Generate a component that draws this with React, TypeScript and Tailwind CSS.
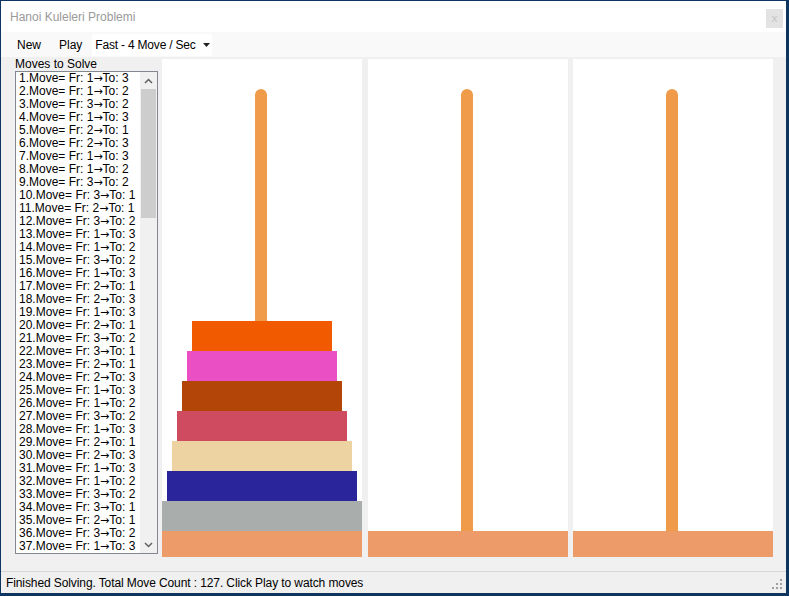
import { useMemo } from 'react';

type Move = { from: number; to: number };

// disk widths/colours, smallest on top
const DISKS = [
  { w: 140, color: 'bg-[#f25a00]' },
  { w: 150, color: 'bg-[#ea50c4]' },
  { w: 160, color: 'bg-[#b34508]' },
  { w: 170, color: 'bg-[#cf4b5f]' },
  { w: 180, color: 'bg-[#eed3a2]' },
  { w: 190, color: 'bg-[#2b259c]' },
  { w: 200, color: 'bg-[#a9aeac]' },
];

// rows that fit in the list box
const VISIBLE_ROWS = 37;

function solve(n: number, from: number, to: number, via: number, out: Move[]) {
  if (n === 0) return;
  solve(n - 1, from, via, to, out);
  out.push({ from, to });
  solve(n - 1, via, to, from, out);
}

function Chevron({ up }: { up?: boolean }) {
  return (
    <svg width="9" height="6" viewBox="0 0 9 6" className="text-[#606060]">
      <polyline
        points={up ? '1,5 4.5,1.5 8,5' : '1,1 4.5,4.5 8,1'}
        fill="none"
        stroke="currentColor"
        strokeWidth="1.5"
      />
    </svg>
  );
}

function Tower({ disks }: { disks: typeof DISKS }) {
  return (
    <div className="w-[200px] h-full bg-white flex flex-col items-center">
      <div className="mt-[30px] flex-1 w-[12px] mr-[2px] rounded-t-full bg-[#ef9b4a]" />
      {disks.map((d) => (
        <div key={d.w} className={`h-[30px] ${d.color}`} style={{ width: d.w }} />
      ))}
      <div className="h-[26px] w-full bg-[#ee9b6a]" />
    </div>
  );
}

export default function App() {
  const moves = useMemo(() => {
    const out: Move[] = [];
    solve(7, 1, 3, 2, out);
    return out;
  }, []);

  return (
    <div className="w-[789px] h-[596px] bg-[#0e3460] pl-px pt-px font-['Liberation_Sans',Arial,sans-serif] text-[12px] text-black">
      <div className="w-[785px] h-[592px] bg-[#f0f0f0] flex flex-col">
        {/* Title bar */}
        <div className="h-[31px] bg-white flex items-center pl-[9px] pr-[3px]">
          <span className="flex-1 text-[#9a9a9a]">Hanoi Kuleleri Problemi</span>
          <div className="self-start mt-[8px] w-[17px] h-[19px] bg-[#e3e3e3] flex items-center justify-center text-[11px] leading-none text-[#c4c4c4]">
            x
          </div>
        </div>

        {/* Menu */}
        <div className="h-[25px] bg-[#f9f9f9] flex items-center pl-[16px]">
          <span>New</span>
          <span className="ml-[18px]">Play</span>
          <div className="ml-[10px] w-[120px] h-[22px] bg-white flex items-center">
            <div className="ml-[3px] w-[101px] overflow-hidden whitespace-nowrap tracking-[-0.2px]">
              Fast - 4 Move / Sec
            </div>
            <svg width="7" height="4" viewBox="0 0 7 4" className="ml-[7px]">
              <polygon points="0,0 7,0 3.5,4" fill="#222" />
            </svg>
          </div>
        </div>

        {/* Body */}
        <div className="h-[514px] flex pl-[14px]">
          <div className="w-[143px] flex flex-col">
            <div className="h-[14px] leading-[14px]">Moves to Solve</div>
            <div className="h-[483px] border border-[#828790] bg-white flex overflow-hidden">
              <div className="flex-1 pl-[3px]">
                {moves.slice(0, VISIBLE_ROWS).map((m, i) => (
                  <div key={i} className="h-[13px] leading-[13px] whitespace-nowrap">
                    {i + 1}.Move= Fr: {m.from}
                    <span className="font-['DejaVu_Sans',sans-serif] text-[11px]">→</span>
                    To: {m.to}
                  </div>
                ))}
              </div>
              <div className="w-[17px] h-full bg-[#f0f0f0] flex flex-col">
                <div className="h-[17px] flex items-center justify-center">
                  <Chevron up />
                </div>
                <div className="h-[129px] mx-px bg-[#cdcdcd]" />
                <div className="flex-1" />
                <div className="h-[17px] flex items-center justify-center">
                  <Chevron />
                </div>
              </div>
            </div>
          </div>

          <div className="ml-[4px] mt-[2px] h-[498px] flex">
            <Tower disks={DISKS} />
            <div className="ml-[6px]">
              <Tower disks={[]} />
            </div>
            <div className="ml-[5px]">
              <Tower disks={[]} />
            </div>
          </div>
        </div>

        {/* Status bar */}
        <div className="flex-1 border-t border-[#d7d7d7] flex items-center pl-[5px] pr-[3px]">
          <span className="flex-1 tracking-[-0.1px]">
            Finished Solving. Total Move Count : 127. Click Play to watch moves
          </span>
          <svg width="12" height="12" viewBox="0 0 12 12" className="self-end mb-[3px]">
            <rect x="9" y="1" width="2" height="2" fill="#a0a0a0" />
            <rect x="5" y="5" width="2" height="2" fill="#a0a0a0" />
            <rect x="9" y="5" width="2" height="2" fill="#a0a0a0" />
            <rect x="1" y="9" width="2" height="2" fill="#a0a0a0" />
            <rect x="5" y="9" width="2" height="2" fill="#a0a0a0" />
            <rect x="9" y="9" width="2" height="2" fill="#a0a0a0" />
          </svg>
        </div>
      </div>
    </div>
  );
}
